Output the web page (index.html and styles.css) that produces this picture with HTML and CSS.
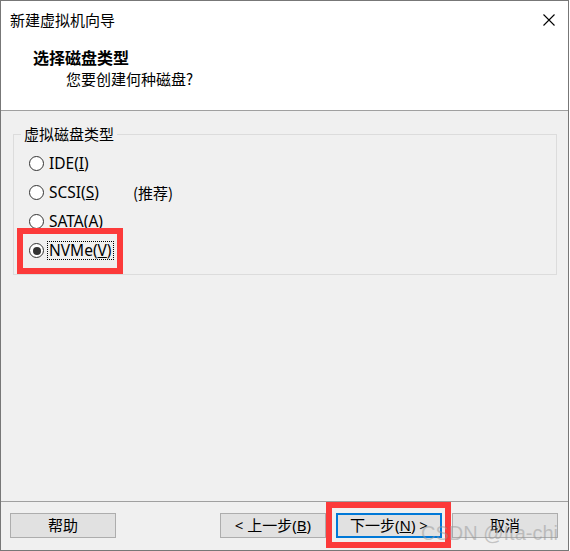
FILE: index.html
```html
<!DOCTYPE html>
<html lang="zh-CN">
<head>
    <meta charset="UTF-8">
    <title>新建虚拟机向导</title>
    <link rel="stylesheet" href="styles.css">
</head>
<body>

<div class="dialog">
    <!-- Header -->
    <div class="header">
        <div class="titlebar">
            <span class="title">新建虚拟机向导</span>
            <svg class="close" width="12" height="12" viewBox="0 0 12 12">
                <path d="M0.5 0.5 L11.5 11.5 M11.5 0.5 L0.5 11.5" stroke="#000" stroke-width="1.1" fill="none"/>
            </svg>
        </div>
        <div class="heading">选择磁盘类型</div>
        <div class="subheading">您要创建何种磁盘?</div>
    </div>

    <!-- Options -->
    <div class="content">
        <div class="group">
            <span class="group-title">虚拟磁盘类型</span>
            <div class="option">
                <span class="radio"></span>
                <span class="label">IDE(<u>I</u>)</span>
            </div>
            <div class="option">
                <span class="radio"></span>
                <span class="label wide">SCSI(<u>S</u>)</span>
                <span class="note">(推荐)</span>
            </div>
            <div class="option">
                <span class="radio"></span>
                <span class="label">SATA(<u>A</u>)</span>
            </div>
            <div class="option marked">
                <span class="radio checked"></span>
                <span class="label focus">NVMe(<u>V</u>)</span>
                <span class="mark"></span>
            </div>
        </div>
    </div>

    <!-- Buttons -->
    <div class="footer">
        <button class="btn">帮助</button>
        <div class="nav">
            <button class="btn">&lt; 上一步(<u>B</u>)</button>
            <span class="btn-wrap">
                <button class="btn default">下一步(<u>N</u>) &gt;</button>
                <span class="mark"></span>
            </span>
            <button class="btn">取消</button>
        </div>
    </div>

    <div class="watermark">CSDN @Ita-chi</div>
</div>

</body>
</html>
```

FILE: styles.css
```css
body {
    margin: 0;
    padding: 0;
    background-color: #fff;
    font-family: "Noto Sans", "Noto Sans CJK SC", sans-serif;
    font-size: 15px;
    color: #000;
}
.dialog {
    position: relative;
    width: 569px;
    height: 551px;
    box-sizing: border-box;
    border: 1px solid #777;
    display: flex;
    flex-direction: column;
}
.header {
    height: 109px;
    background-color: #fff;
    border-bottom: 1px solid #a0a0a0;
}
.titlebar {
    height: 38px;
    padding: 0 13px 0 9px;
    display: flex;
    justify-content: space-between;
    align-items: center;
}
.title {
    font-family: "Noto Sans CJK SC", sans-serif;
    line-height: 20px;
}
.heading {
    margin: 8px 0 0 32px;
    font-family: "Noto Sans CJK SC", sans-serif;
    font-size: 16px;
    font-weight: bold;
    line-height: 20px;
}
.subheading {
    margin: 2px 0 0 65px;
    font-family: "Noto Sans CJK SC", sans-serif;
    line-height: 20px;
}
.content {
    height: 391px;
    background-color: #f0f0f0;
    border-bottom: 1px solid #a0a0a0;
    padding-top: 23px;
    box-sizing: border-box;
}
.group {
    position: relative;
    margin: 0 11px 0 12px;
    padding: 14px 0 9px 15px;
    border: 1px solid #dcdcdc;
}
.group-title {
    position: absolute;
    top: -11px;
    left: 7px;
    padding: 0 3px;
    background-color: #f0f0f0;
    font-family: "Noto Sans CJK SC", sans-serif;
    line-height: 20px;
}
.option {
    position: relative;
    height: 29px;
    display: flex;
    align-items: center;
}
.radio {
    width: 15px;
    height: 15px;
    box-sizing: border-box;
    border: 1px solid #333;
    border-radius: 50%;
    background-color: #fff;
    display: flex;
    justify-content: center;
    align-items: center;
}
.radio.checked::after {
    content: "";
    width: 8px;
    height: 8px;
    border-radius: 50%;
    background-color: #333;
}
.label {
    margin-left: 3px;
    padding: 0 1px;
    border: 1px solid transparent;
    font-size: 15.5px;
    line-height: 17px;
}
.label.wide {
    width: 82px;
}
.label.focus {
    border: 1px dotted #000;
}
.note {
    font-family: "Noto Sans CJK SC", sans-serif;
}
.mark {
    position: absolute;
    box-sizing: border-box;
    border: 6px solid #fc3a3a;
    pointer-events: none;
}
.option.marked .mark {
    left: -12px;
    top: -8px;
    width: 106px;
    height: 46px;
}
.footer {
    flex: 1;
    background-color: #f0f0f0;
    padding: 11px 10px 0 9px;
    display: flex;
    justify-content: space-between;
    align-items: flex-start;
}
.nav {
    display: flex;
    gap: 10px;
}
.btn {
    width: 106px;
    height: 25px;
    margin: 0;
    padding: 0;
    box-sizing: border-box;
    border: 1px solid #adadad;
    background-color: #e1e1e1;
    font-family: "Noto Sans", "Noto Sans CJK SC", sans-serif;
    font-size: 15px;
    color: #000;
    line-height: 21px;
}
.btn.default {
    border: 2px solid #0078d7;
}
.btn-wrap {
    position: relative;
    display: block;
}
.btn-wrap .mark {
    top: -11px;
    left: -10px;
    right: -9px;
    bottom: -10px;
}
.watermark {
    position: absolute;
    left: 420px;
    top: 520px;
    font-family: "Liberation Sans", sans-serif;
    font-size: 20px;
    line-height: 24px;
    color: rgba(150, 150, 150, 0.5);
    pointer-events: none;
}
```
